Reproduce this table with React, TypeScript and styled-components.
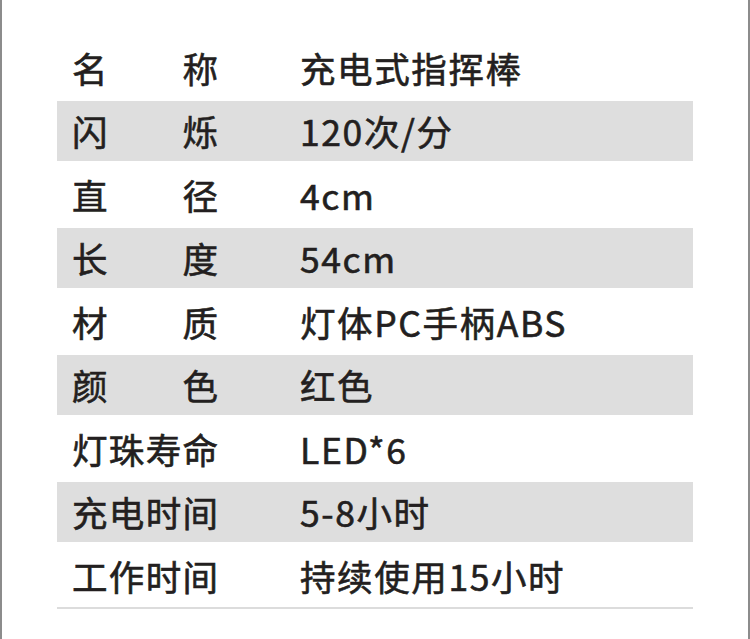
import styled, { createGlobalStyle } from 'styled-components';

const GlobalStyle = createGlobalStyle`
  html, body {
    margin: 0;
    padding: 0;
    background: #ffffff;
  }
  body {
    font-family: "Noto Sans CJK SC", "Noto Sans", sans-serif;
    color: #231f20;
  }
`;

const Page = styled.div`
  box-sizing: border-box;
  width: 750px;
  height: 639px;
  border-left: 2px solid #8c8c8c;
  border-right: 2px solid #8c8c8c;
  padding: 37.5px 0 0 55px;
`;

const Table = styled.div`
  width: 636px;
  display: flex;
  flex-direction: column;
  gap: 3.5px;
  border-bottom: 2px solid #dcdcdc;
  padding-bottom: 1.5px;
`;

const Row = styled.div<{ $shaded: boolean }>`
  display: grid;
  grid-template-columns: 243px 1fr;
  align-items: center;
  height: 60px;
  background: ${(p) => (p.$shaded ? '#dedede' : 'transparent')};
  font-size: 35.5px;
  font-weight: 400;
  line-height: 1;
  -webkit-text-stroke: 0.6px #231f20;
`;

const Label = styled.div`
  width: 146px;
  padding-left: 15px;
  text-align: justify;
  text-align-last: justify;
  white-space: nowrap;
`;

const Value = styled.div`
  white-space: nowrap;
  letter-spacing: 1.6px;
`;

const specs: [string, string][] = [
  ['名称', '充电式指挥棒'],
  ['闪烁', '120次/分'],
  ['直径', '4cm'],
  ['长度', '54cm'],
  ['材质', '灯体PC手柄ABS'],
  ['颜色', '红色'],
  ['灯珠寿命', 'LED*6'],
  ['充电时间', '5-8小时'],
  ['工作时间', '持续使用15小时'],
];

const spread = (s: string) => (s.length === 2 ? s.split('').join(' ') : s);

const App = () => {
  return (
    <>
      <GlobalStyle />
      <Page>
        <Table>
          {specs.map(([label, value], i) => (
            <Row key={label} $shaded={i % 2 === 1}>
              <Label>{spread(label)}</Label>
              <Value>{value}</Value>
            </Row>
          ))}
        </Table>
      </Page>
    </>
  );
};

export default App;
